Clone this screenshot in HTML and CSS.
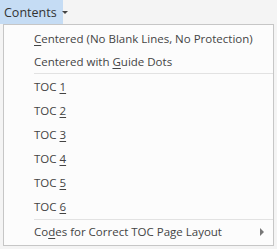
FILE: index.html
```html
<!DOCTYPE html>
<html lang="en">
<head>
    <meta charset="UTF-8">
    <title>Contents Menu</title>
    <link rel="stylesheet" href="styles.css">
</head>
<body>
    <!-- Ribbon dropdown button -->
    <div class="toolbar">
        <button class="menu-button">Contents<span class="caret"></span></button>
    </div>

    <!-- Dropdown menu -->
    <div class="menu">
        <div class="item top"><u>C</u>entered (No Blank Lines, No Protection)</div>
        <div class="item top">Centered with <u>G</u>uide Dots</div>
        <div class="separator"></div>
        <div class="item">TOC <u>1</u></div>
        <div class="item">TOC <u>2</u></div>
        <div class="item">TOC <u>3</u></div>
        <div class="item">TOC <u>4</u></div>
        <div class="item">TOC <u>5</u></div>
        <div class="item">TOC <u>6</u></div>
        <div class="separator last"></div>
        <div class="item submenu">
            <span>Co<u>d</u>es for Correct TOC Page Layout</span>
            <span class="arrow"></span>
        </div>
    </div>
</body>
</html>
```

FILE: styles.css
```css
body {
    margin: 0;
    background-color: #f4f4f4;
    font-family: "Open Sans", "Noto Sans", sans-serif;
    color: #444;
    width: 277px;
    height: 249px;
    overflow: hidden;
}
.toolbar {
    display: flex;
    height: 24px;
}
.menu-button {
    display: flex;
    align-items: center;
    gap: 5px;
    width: 63px;
    height: 24px;
    padding: 0 0 0 4px;
    border: none;
    background-color: #c5dcf4;
    color: #333;
    font-family: inherit;
    font-size: 12.5px;
}
.caret {
    width: 0;
    height: 0;
    border-left: 3px solid transparent;
    border-right: 3px solid transparent;
    border-top: 3px solid #444;
    margin-top: 1px;
}
.menu {
    width: 269px;
    margin-left: 3px;
    padding: 2px 0 0;
    height: 218px;
    border: 1px solid #c6c6c6;
    background-color: #fcfcfc;
    font-size: 11.5px;
}
.item {
    height: 24px;
    line-height: 24px;
    padding: 0 9px 0 30px;
    white-space: nowrap;
}
.item.top {
    height: 23px;
    line-height: 23px;
}
.item u {
    text-underline-offset: 2px;
}
.submenu {
    display: flex;
    align-items: center;
    justify-content: space-between;
}
.separator {
    height: 1px;
    margin: 0 0 1px 30px;
    background-color: #e2e2e2;
}
.separator.last {
    margin: 0 0 0 30px;
}
.arrow {
    width: 0;
    height: 0;
    border-top: 4px solid transparent;
    border-bottom: 4px solid transparent;
    border-left: 4px solid #777;
}
```
